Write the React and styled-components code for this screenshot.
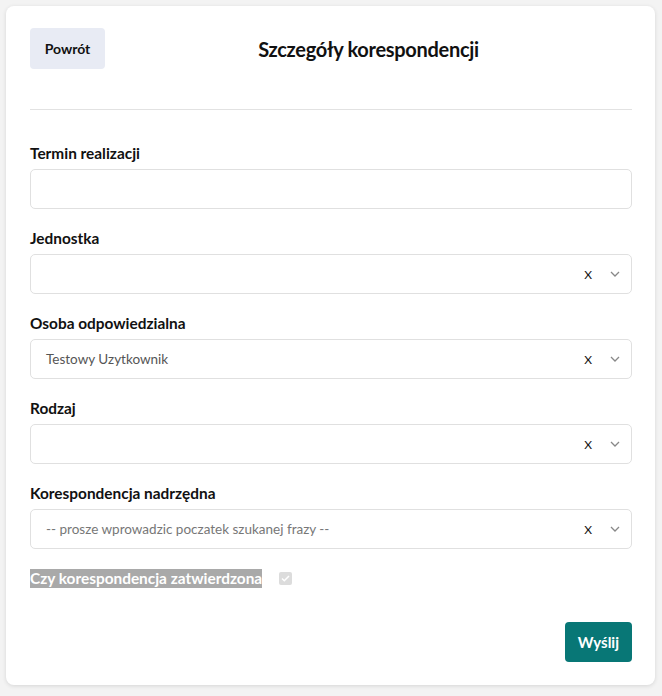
import React from 'react'
import styled, { createGlobalStyle } from 'styled-components'

const GlobalStyle = createGlobalStyle`
  body {
    margin: 0;
    background: #f3f3f3;
    font-family: Lato, "Open Sans", sans-serif;
    color: #111;
  }
`

const Page = styled.div`
  padding: 6px 7px 11px 6px;
`

const Card = styled.div`
  background: #fff;
  border-radius: 8px;
  box-shadow: 0 1px 4px rgba(0, 0, 0, 0.12);
  padding: 22px 23px 23px 24px;
`

const Header = styled.div`
  display: flex;
  align-items: center;
  padding-bottom: 40px;
  border-bottom: 1px solid #e2e2e2;
  margin-bottom: 34px;
`

const BackButton = styled.button`
  width: 75px;
  height: 41px;
  border: none;
  border-radius: 4px;
  background: #e8ebf4;
  font-family: inherit;
  font-size: 14px;
  font-weight: 700;
  color: #111;
  cursor: pointer;
`

const Title = styled.h1`
  flex: 1;
  margin: 0;
  text-align: center;
  font-size: 20px;
  font-weight: 700;
  letter-spacing: -0.3px;
`

const Field = styled.div`
  margin-bottom: 20px;
`

const Label = styled.div`
  font-size: 15.4px;
  font-weight: 700;
  line-height: 19px;
  margin-bottom: 6px;
`

const Input = styled.input`
  box-sizing: border-box;
  display: block;
  width: 100%;
  height: 40px;
  border: 1px solid #e0e0e0;
  border-radius: 5px;
  padding: 0 15px;
  font-family: inherit;
  font-size: 14px;
  outline: none;
`

const SelectBox = styled.div`
  box-sizing: border-box;
  display: flex;
  align-items: center;
  height: 40px;
  border: 1px solid #e0e0e0;
  border-radius: 5px;
  padding: 0 11px 0 15px;
`

const SelectValue = styled.div`
  flex: 1;
  font-size: 13.5px;
  color: ${p => (p.$placeholder ? '#777' : '#555')};
`

const Clear = styled.span`
  font-size: 12px;
  color: #111;
  margin-right: 18px;
`

const Chevron = () => (
  <svg width="10" height="6" viewBox="0 0 10 6">
    <path d="M1 1l4 4 4-4" fill="none" stroke="#888" strokeWidth="1.3" />
  </svg>
)

const CheckRow = styled.div`
  display: flex;
  align-items: center;
  gap: 17px;
  margin-bottom: 34px;
`

const CheckLabel = styled.span`
  background: #a9a9a9;
  color: #fff;
  font-size: 15.4px;
  font-weight: 700;
  line-height: 19px;
`

const Check = styled.span`
  width: 13px;
  height: 13px;
  border-radius: 2px;
  background: #dcdcdc;
  display: flex;
  align-items: center;
  justify-content: center;
`

const Footer = styled.div`
  display: flex;
  justify-content: flex-end;
`

const SubmitButton = styled.button`
  height: 40px;
  padding: 0 13px;
  border: none;
  border-radius: 4px;
  background: #087776;
  color: #fff;
  font-family: inherit;
  font-size: 15px;
  font-weight: 700;
`

function Select({ value, placeholder }) {
  return (
    <SelectBox>
      <SelectValue $placeholder={!value}>{value || placeholder}</SelectValue>
      <Clear>X</Clear>
      <Chevron />
    </SelectBox>
  )
}

export default function App() {
  return (
    <Page>
      <GlobalStyle />
      <Card>
        <Header>
          <BackButton>Powrót</BackButton>
          <Title>Szczegóły korespondencji</Title>
        </Header>
        <Field>
          <Label>Termin realizacji</Label>
          <Input />
        </Field>
        <Field>
          <Label>Jednostka</Label>
          <Select />
        </Field>
        <Field>
          <Label>Osoba odpowiedzialna</Label>
          <Select value="Testowy Uzytkownik" />
        </Field>
        <Field>
          <Label>Rodzaj</Label>
          <Select />
        </Field>
        <Field>
          <Label>Korespondencja nadrzędna</Label>
          <Select placeholder="-- prosze wprowadzic poczatek szukanej frazy --" />
        </Field>
        <CheckRow>
          <CheckLabel>Czy korespondencja zatwierdzona</CheckLabel>
          <Check>
            <svg width="9" height="7" viewBox="0 0 9 7">
              <path d="M1 3.5l2.3 2.3L8 1" fill="none" stroke="#fff" strokeWidth="1.5" />
            </svg>
          </Check>
        </CheckRow>
        <Footer>
          <SubmitButton>Wyślij</SubmitButton>
        </Footer>
      </Card>
    </Page>
  )
}
